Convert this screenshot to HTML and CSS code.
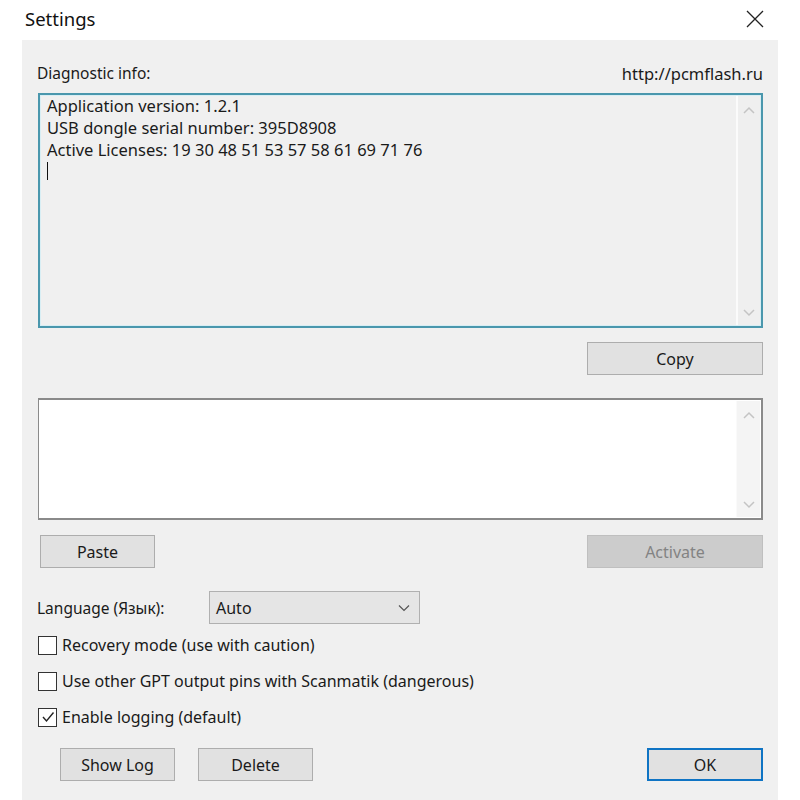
FILE: index.html
```html
<!DOCTYPE html>
<html lang="en">
<head>
  <meta charset="UTF-8" />
  <title>Settings</title>
  <link rel="stylesheet" href="styles.css">
</head>
<body>
  <div class="titlebar">
    <span class="title">Settings</span>
    <svg class="close" width="18" height="18" viewBox="0 0 18 18"><path d="M1 1 L17 17 M17 1 L1 17" stroke="#222" stroke-width="1.3" fill="none"/></svg>
  </div>
  <div class="panel">
    <div class="row header-row">
      <span>Diagnostic info:</span>
      <span class="link">http://pcmflash.ru</span>
    </div>
    <div class="textbox info-box">
      <div class="text-content">
        <div>Application version: 1.2.1</div>
        <div>USB dongle serial number: 395D8908</div>
        <div>Active Licenses: 19 30 48 51 53 57 58 61 69 71 76</div>
        <div class="caret"></div>
      </div>
      <div class="scrollbar">
        <svg width="12" height="8" viewBox="0 0 12 8"><path d="M1 7 L6 2 L11 7" stroke="#c4c4c4" stroke-width="1.5" fill="none"/></svg>
        <svg width="12" height="8" viewBox="0 0 12 8"><path d="M1 1 L6 6 L11 1" stroke="#c4c4c4" stroke-width="1.5" fill="none"/></svg>
      </div>
    </div>
    <div class="row right-row copy-row">
      <button class="btn wide">Copy</button>
    </div>
    <div class="textbox key-box">
      <div class="text-content"></div>
      <div class="scrollbar">
        <svg width="12" height="8" viewBox="0 0 12 8"><path d="M1 7 L6 2 L11 7" stroke="#c4c4c4" stroke-width="1.5" fill="none"/></svg>
        <svg width="12" height="8" viewBox="0 0 12 8"><path d="M1 1 L6 6 L11 1" stroke="#c4c4c4" stroke-width="1.5" fill="none"/></svg>
      </div>
    </div>
    <div class="row paste-row">
      <button class="btn small paste">Paste</button>
      <button class="btn wide disabled">Activate</button>
    </div>
    <div class="row lang-row">
      <span class="lang-label">Language (Язык):</span>
      <div class="select">
        <span>Auto</span>
        <svg width="12" height="8" viewBox="0 0 12 8"><path d="M1 1.5 L6 6.5 L11 1.5" stroke="#555" stroke-width="1.2" fill="none"/></svg>
      </div>
    </div>
    <div class="check-row">
      <span class="checkbox"></span>
      <span>Recovery mode (use with caution)</span>
    </div>
    <div class="check-row">
      <span class="checkbox"></span>
      <span>Use other GPT output pins with Scanmatik (dangerous)</span>
    </div>
    <div class="check-row">
      <span class="checkbox">
        <svg width="14" height="14" viewBox="0 0 14 14"><path d="M2 7 L5.5 11 L12.5 2.5" stroke="#222" stroke-width="1.4" fill="none"/></svg>
      </span>
      <span>Enable logging (default)</span>
    </div>
    <div class="row bottom-row">
      <div class="log-buttons">
        <button class="btn small">Show Log</button>
        <button class="btn small">Delete</button>
      </div>
      <button class="btn small ok">OK</button>
    </div>
  </div>
</body>
</html>
```

FILE: styles.css
```css
* { margin: 0; padding: 0; box-sizing: border-box; }
body {
  font-family: "Noto Sans", "Open Sans", sans-serif;
  font-size: 16px;
  color: #1a1a1a;
  background-color: #fff;
  width: 800px;
  height: 800px;
  overflow: hidden;
}
.titlebar {
  height: 40px;
  display: flex;
  align-items: center;
  justify-content: space-between;
  padding: 0 36px 3px 25px;
}
.title { font-size: 18.5px; color: #111; }
.panel {
  margin-left: 22px;
  width: 756px;
  height: 760px;
  background-color: #f0f0f0;
  padding: 23px 15px 0 15px;
}
.row { display: flex; align-items: center; }
.header-row {
  justify-content: space-between;
  height: 20px;
  font-size: 15.5px;
}
.link { font-size: 16.5px; }
.textbox {
  display: flex;
  margin-top: 10px;
  margin-left: 1px;
}
.info-box {
  height: 235px;
  border: 2px solid #4a97ad;
  box-shadow: inset 0 0 0 1px #d8eef4;
  background-color: #f0f0f0;
}
.key-box {
  height: 122px;
  margin-top: 23px;
  border: 2px solid #8a8a8a;
  border-left-width: 1px;
  background-color: #fff;
}
.text-content {
  flex: 1;
  padding: 0 7px;
  font-size: 16.5px;
  line-height: 22px;
}
.caret {
  width: 1px;
  height: 18px;
  margin-top: 1px;
  background-color: #111;
}
.scrollbar {
  width: 24px;
  display: flex;
  flex-direction: column;
  justify-content: space-between;
  align-items: center;
  padding: 10px 0 8px;
  background-color: #f3f3f3;
  border-left: 1px solid #fafafa;
  margin: 1px;
}
.info-box .scrollbar { background-color: #efefef; border-left: 2px solid #fbfbfb; }
.key-box .scrollbar { background-color: #f4f4f4; }
.right-row { justify-content: flex-end; }
.copy-row { margin-top: 14px; }
.btn {
  font-family: inherit;
  font-size: 16px;
  color: #1a1a1a;
  background-color: #e1e1e1;
  border: 1px solid #adadad;
  height: 33px;
}
.btn.wide { width: 176px; }
.btn.small { width: 115px; }
.btn.disabled {
  background-color: #cccccc;
  border-color: #bfbfbf;
  color: #838383;
}
.paste-row {
  margin-top: 15px;
  justify-content: space-between;
  padding-left: 3px;
}
.lang-row { margin-top: 23px; }
.lang-label { width: 172px; font-size: 15.5px; }
.select {
  width: 211px;
  height: 33px;
  display: flex;
  align-items: center;
  justify-content: space-between;
  padding: 0 9px 0 6px;
  background-color: #e5e5e5;
  border: 1px solid #b0b0b0;
  font-size: 16px;
}
.check-row {
  display: flex;
  align-items: center;
  height: 36px;
  gap: 5px;
  font-size: 16px;
  padding-left: 1px;
}
.lang-row + .check-row { margin-top: 3px; }
.checkbox {
  width: 19px;
  height: 19px;
  border: 1px solid #333;
  background-color: #fff;
  display: flex;
  align-items: center;
  justify-content: center;
}
.bottom-row {
  margin-top: 13px;
  justify-content: space-between;
}
.log-buttons {
  display: flex;
  gap: 23px;
  padding-left: 23px;
}
.btn.ok {
  border: 2px solid #0f74c4;
  width: 116px;
}
```
